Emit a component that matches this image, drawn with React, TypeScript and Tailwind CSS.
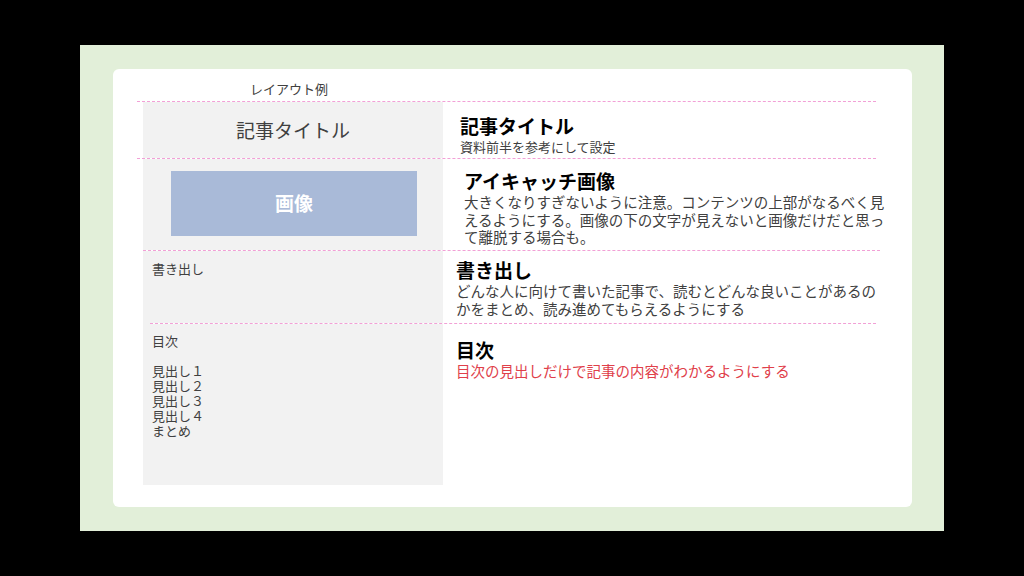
const F = { fontFamily: '"Noto Sans CJK JP", "Noto Sans", sans-serif' };

export default function App() {
  return (
    <div className="w-[1024px] h-[576px] bg-black pt-[45px] pl-[80px]" style={F}>
      <div className="w-[864px] h-[486px] bg-[#e2efd9] pt-[24px] pl-[33px]">
        <div className="w-[799px] h-[438px] bg-white rounded-[6px] pl-[24px] pt-[10px] flex flex-col">
          <div className="h-[22px] pl-[113px] text-[13px] leading-[20px] text-[#404040]">レイアウト例</div>
          <div className="w-[739px] flex flex-col">
            <div className="h-[57px] flex border-t border-dashed border-[#f2a0d6]">
              <div className="shrink-0 ml-[6px] w-[300px] bg-[#f2f2f2] flex items-center justify-center text-[19px] text-[#404040]">記事タイトル</div>
              <div className="pl-[17px] pt-[12px]">
                <div className="text-[19px] font-bold text-black leading-[24px]">記事タイトル</div>
                <div className="text-[13px] text-[#404040] leading-[17px]">資料前半を参考にして設定</div>
              </div>
            </div>
            <div className="h-[92px] flex border-t border-dashed border-[#f2a0d6]">
              <div className="shrink-0 ml-[6px] w-[300px] bg-[#f2f2f2] pt-[12px] pl-[28px]">
                <div className="w-[246px] h-[65px] bg-[#a9bad8] flex items-center justify-center text-white font-bold text-[19px]">画像</div>
              </div>
              <div className="pl-[21px] pt-[10px]">
                <div className="text-[19px] font-bold text-black leading-[24px]">アイキャッチ画像</div>
                <div className="text-[14.5px] leading-[17.5px] text-[#404040] w-[432px]">大きくなりすぎないように注意。コンテンツの上部がなるべく見えるようにする。画像の下の文字が見えないと画像だけだと思って離脱する場合も。</div>
              </div>
            </div>
            <div className="ml-[6px] w-[737px] h-[73px] flex border-t border-dashed border-[#f2a0d6]">
              <div className="shrink-0 w-[300px] bg-[#f2f2f2] pl-[9px] pt-[8px] text-[13px] text-[#404040]">書き出し</div>
              <div className="pl-[13px] pt-[7px]">
                <div className="text-[19px] font-bold text-black leading-[24px]">書き出し</div>
                <div className="text-[14.5px] leading-[17.5px] text-[#404040] w-[432px]">どんな人に向けて書いた記事で、読むとどんな良いことがあるのかをまとめ、読み進めてもらえるようにする</div>
              </div>
            </div>
            <div className="flex">
              <div className="shrink-0 ml-[6px] w-[7px] h-[162px] bg-[#f2f2f2]"></div>
              <div className="w-[738px] h-[162px] flex border-t border-dashed border-[#f2a0d6]">
                <div className="shrink-0 w-[293px] bg-[#f2f2f2] pl-[2px] pt-[9px] text-[13px] leading-[15px] text-[#404040]">
                  <div>目次</div>
                  <div className="mt-[15px]">見出し１</div>
                  <div>見出し２</div>
                  <div>見出し３</div>
                  <div>見出し４</div>
                  <div>まとめ</div>
                </div>
                <div className="pl-[13px] pt-[14px]">
                  <div className="text-[19px] font-bold text-black leading-[24px]">目次</div>
                  <div className="text-[14.5px] leading-[17.5px] text-[#e0404a]">目次の見出しだけで記事の内容がわかるようにする</div>
                </div>
              </div>
            </div>
          </div>
        </div>
      </div>
    </div>
  );
}
